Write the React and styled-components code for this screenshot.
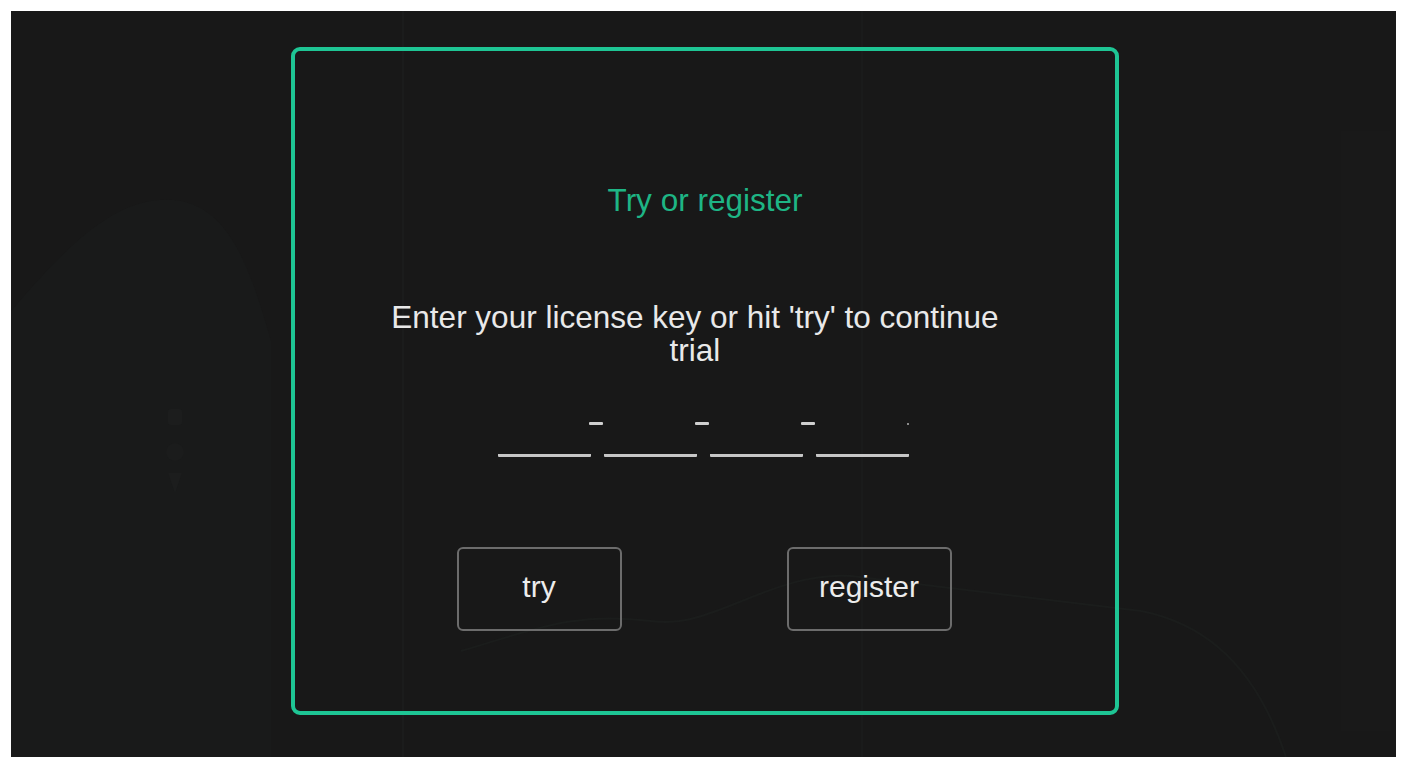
import React from 'react';
import styled, { createGlobalStyle } from 'styled-components';

const GlobalStyle = createGlobalStyle`
    html, body {
        margin: 0;
        background: #ffffff;
    }
`;

export default function App () {
    return (
        <>
            <GlobalStyle />
            <Page>
                <Screen>
                    <BackdropChart />
                    <Dialog>
                        <Title>Try or register</Title>
                        <Message>Enter your license key or hit 'try' to continue trial</Message>
                        <KeyRow>
                            <KeyField />
                            <Separator><Dash /></Separator>
                            <KeyField />
                            <Separator><Dash /></Separator>
                            <KeyField />
                            <Separator><Dash /></Separator>
                            <KeyField />
                            <Tail />
                        </KeyRow>
                        <Actions>
                            <ActionButton>try</ActionButton>
                            <ActionButton>register</ActionButton>
                        </Actions>
                    </Dialog>
                </Screen>
            </Page>
        </>
    );
}

// the faint chart that sits behind the dialog
const BackdropChart = () => (
    <ChartSvg viewBox="0 0 1385 746" preserveAspectRatio="none">
        <path d="M0 300 C 60 230, 110 180, 170 190 C 220 200, 240 260, 260 330 L 260 746 L 0 746 Z" fill="#191a1a" />
        <line x1="392" y1="0" x2="392" y2="746" stroke="#1b1c1c" strokeWidth="2" />
        <line x1="851" y1="0" x2="851" y2="746" stroke="#1a1b1b" strokeWidth="2" />
        <path d="M450 640 C 520 620, 560 600, 640 610 C 700 620, 760 560, 840 565 L 1130 600 C 1180 610, 1240 640, 1275 746" fill="none" stroke="#1b1d1c" strokeWidth="2" />
        <rect x="157" y="398" width="14" height="16" rx="3" fill="#1c1d1d" />
        <circle cx="164" cy="441" r="9" fill="#1b1c1c" />
        <path d="M157 462 L 171 462 L 164 482 Z" fill="#1c1d1d" />
        <rect x="1330" y="120" width="50" height="600" fill="#191919" />
    </ChartSvg>
);

const Page = styled.div`
    padding: 11px 11px 8px 11px;
    font-family: "Liberation Sans", Arial, sans-serif;
`;

const Screen = styled.div`
    position: relative;
    height: 746px;
    background: #181818;
    display: flex;
    justify-content: center;
    overflow: hidden;
`;

const ChartSvg = styled.svg`
    position: absolute;
    inset: 0;
    width: 100%;
    height: 100%;
`;

const Dialog = styled.div`
    position: relative;
    box-sizing: border-box;
    width: 828px;
    height: 668px;
    margin: 36px 0 0 3px;
    border: 4px solid #1ec594;
    border-radius: 9px;
    display: flex;
    flex-direction: column;
    align-items: center;
    padding-top: 131px;
`;

const Title = styled.div`
    color: #1eb585;
    font-size: 31.5px;
    line-height: 36px;
`;

const Message = styled.div`
    width: 640px;
    margin: 83px 20px 0 0;
    color: #e9e9e9;
    font-size: 31.5px;
    line-height: 33px;
    text-align: center;
`;

const KeyRow = styled.div`
    display: flex;
    align-items: flex-start;
    margin: 50px 4px 0 0;
    height: 40px;
`;

const KeyField = styled.div`
    box-sizing: border-box;
    width: 93px;
    height: 40px;
    border-bottom: 3px solid #c6c6c6;
    border-radius: 1px;
`;

const Separator = styled.div`
    width: 13px;
    height: 40px;
    display: flex;
    justify-content: center;
`;

const Dash = styled.div`
    width: 14px;
    height: 3px;
    margin: 5px 2px 0 0;
    background: #cfcfcf;
    border-radius: 1px;
    flex-shrink: 0;
`;

const Tail = styled.div`
    width: 2px;
    height: 2px;
    margin: 6px 0 0 -2px;
    background: #8a8a8a;
`;

const Actions = styled.div`
    display: flex;
    gap: 165px;
    margin: 90px 2px 0 0;
`;

const ActionButton = styled.button`
    box-sizing: border-box;
    width: 165px;
    height: 84px;
    background: transparent;
    border: 2px solid #6c6c6c;
    border-radius: 6px;
    color: #ececec;
    font-family: "Liberation Sans", Arial, sans-serif;
    font-size: 30px;
    padding: 0 0 4px;
    cursor: pointer;
`;
